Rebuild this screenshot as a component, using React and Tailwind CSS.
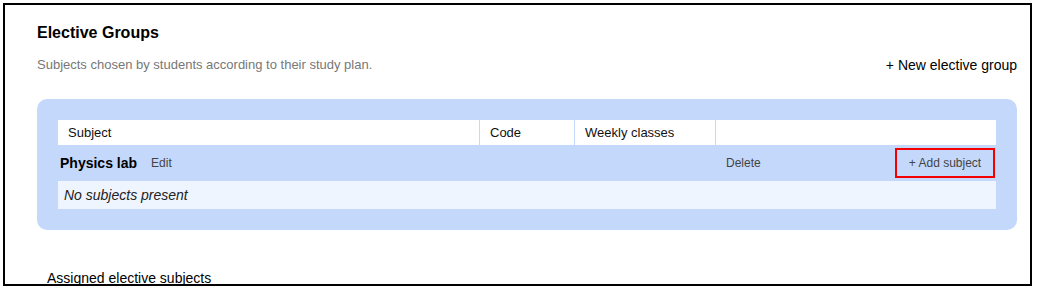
import React from 'react';

const columns = ['Subject', 'Code', 'Weekly classes', ''];

const groups = [
  { name: 'Physics lab', subjects: [] },
];

const ElectiveGroup = ({ group }) => (
  <div className="bg-[#c4d8fc] rounded-[10px] p-[21px]">
    <div className="grid grid-cols-[421px_94px_140px_280px] gap-x-px">
      {columns.map((col, index) => (
        <div key={index} className="bg-white h-[25px] px-[10px] flex items-center text-[13px] text-[#111]">
          {col}
        </div>
      ))}

      <div className="col-span-3 h-[36px] flex items-center gap-[14px] pl-[2px]">
        <span className="text-[14px] font-bold text-black">{group.name}</span>
        <button className="text-[12px] text-[#444]">Edit</button>
      </div>
      <div className="h-[36px] flex items-center justify-between pl-[10px] pr-px">
        <button className="text-[12px] text-[#444]">Delete</button>
        <button className="w-[100px] h-[30px] border-2 border-[#f50000] text-[12px] text-[#444]">
          + Add subject
        </button>
      </div>

      {group.subjects.length === 0 && (
        <div className="col-span-4 h-[28px] bg-[#eff5fe] flex items-center px-[6px] text-[14px] italic text-[#222]">
          No subjects present
        </div>
      )}
    </div>
  </div>
);

export default function App() {
  return (
    <div className="p-[3px] bg-white" style={{ fontFamily: '"Liberation Sans", Arial, sans-serif' }}>
      <div className="w-[1029px] h-[283px] border-2 border-black overflow-hidden bg-white pl-8 pr-[13px] pt-4">
        <h2 className="text-[16px] leading-6 font-bold text-black">Elective Groups</h2>

        <div className="mt-[10px] flex items-start justify-between">
          <p className="text-[13px] leading-5 text-[#777]">
            Subjects chosen by students according to their study plan.
          </p>
          <button className="text-[14px] leading-5 text-black">+ New elective group</button>
        </div>

        <div className="mt-6">
          {groups.map((group, index) => (
            <ElectiveGroup key={index} group={group} />
          ))}
        </div>

        <div className="mt-[38px] pl-[10px] text-[14px] leading-5 text-black">
          Assigned elective subjects
        </div>
      </div>
    </div>
  );
}
